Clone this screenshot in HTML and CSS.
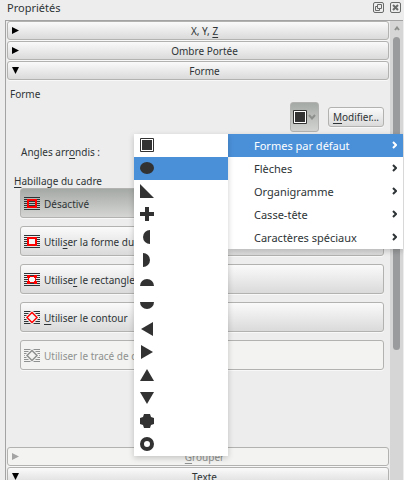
FILE: index.html
```
<!DOCTYPE html>
<html lang="fr">
<head>
<meta charset="utf-8">
<title>Propriétés</title>
<link rel="stylesheet" href="styles.css">
</head>
<body>
<svg class="defs" aria-hidden="true">
  <defs>
    <g id="lines">
      <path d="M0 .5H16M0 2.5H16M0 4.5H16M0 6.5H16M0 8.5H16M0 10.5H16M0 12.5H16" stroke="currentColor" fill="none"/>
    </g>
    <g id="frame-square">
      <path d="M.5 .5H13.5V13.5H.5Z" stroke="#323232" fill="#fff"/>
      <path d="M2 2H12V12H2Z" fill="#323232"/>
    </g>
  </defs>
</svg>
<main class="dock">
  <header class="titlebar">
    <h1>Propriétés</h1>
    <button class="tool" aria-label="Détacher"><svg width="11" height="11" viewBox="0 0 11 11"><rect x=".5" y=".5" width="10" height="10" rx="1.5"/><path d="M4.5 2.5H8.5V6.5H4.5ZM4.5 4.5H2.5V8.5H6.5V6.5"/></svg></button>
    <button class="tool" aria-label="Fermer"><svg width="11" height="11" viewBox="0 0 11 11"><rect x=".5" y=".5" width="10" height="10" rx="1.5"/><path class="thick" d="M3 3L8 8M8 3L3 8"/></svg></button>
  </header>
  <div class="body">
    <div class="content">
      <button class="section"><svg class="arrow" viewBox="0 0 7 7"><path d="M0 0L7 3.5L0 7Z"/></svg><span>X, Y, <u>Z</u></span></button>
      <button class="section"><svg class="arrow" viewBox="0 0 7 7"><path d="M0 0L7 3.5L0 7Z"/></svg><span>Ombre Portée</span></button>
      <button class="section"><svg class="arrow" viewBox="0 0 7 7"><path d="M0 0H7L3.5 7Z"/></svg><span>Forme</span></button>
      <section class="shape">
        <p class="caption">Forme</p>
        <div class="row">
          <button class="picker" aria-label="Choisir une forme"><svg width="14" height="14" viewBox="0 0 14 14"><use href="#frame-square"/></svg><svg width="8" height="6" viewBox="0 0 8 6"><path d="M1 1L4 4.5L7 1" fill="none" stroke="#8c8f8b" stroke-width="2"/></svg></button>
          <button class="edit"><u>M</u>odifier...</button>
          <div class="menus">
            <ul class="shapes" role="menu">
              <li><svg viewBox="0 0 14 14"><use href="#frame-square"/></svg></li>
              <li class="on"><svg viewBox="0 0 14 14"><ellipse cx="7" cy="7" rx="7" ry="6"/></svg></li>
              <li><svg viewBox="0 0 14 14"><path d="M0 0L14 14H0Z"/></svg></li>
              <li><svg viewBox="0 0 14 14"><path d="M5 0H9V5H14V9H9V14H5V9H0V5H5Z"/></svg></li>
              <li><svg viewBox="0 0 14 14"><path d="M10 0A7 7 0 0 0 10 14Z"/></svg></li>
              <li><svg viewBox="0 0 14 14"><path d="M3 0A7 7 0 0 1 3 14Z"/></svg></li>
              <li><svg viewBox="0 0 14 14"><path d="M0 10A7 7 0 0 1 14 10Z"/></svg></li>
              <li><svg viewBox="0 0 14 14"><path d="M0 3A7 7 0 0 0 14 3Z"/></svg></li>
              <li><svg viewBox="0 0 14 14"><path d="M13 0V14L1 7Z"/></svg></li>
              <li><svg viewBox="0 0 14 14"><path d="M1 0V14L13 7Z"/></svg></li>
              <li><svg viewBox="0 0 14 14"><path d="M7 1L14 13H0Z"/></svg></li>
              <li><svg viewBox="0 0 14 14"><path d="M0 1H14L7 13Z"/></svg></li>
              <li><svg viewBox="0 0 14 14"><path d="M4 0H10L11 3L14 4V10L11 11L10 14H4L3 11L0 10V4L3 3Z"/></svg></li>
              <li><svg viewBox="0 0 14 14"><circle cx="7" cy="7" r="5" fill="none" stroke="#323232" stroke-width="4"/></svg></li>
            </ul>
            <ul class="families" role="menu">
              <li class="on"><span>Formes par défaut</span><svg viewBox="0 0 5 8"><path d="M1 1L4 4L1 7"/></svg></li>
              <li><span>Flèches</span><svg viewBox="0 0 5 8"><path d="M1 1L4 4L1 7"/></svg></li>
              <li><span>Organigramme</span><svg viewBox="0 0 5 8"><path d="M1 1L4 4L1 7"/></svg></li>
              <li><span>Casse-tête</span><svg viewBox="0 0 5 8"><path d="M1 1L4 4L1 7"/></svg></li>
              <li><span>Caractères spéciaux</span><svg viewBox="0 0 5 8"><path d="M1 1L4 4L1 7"/></svg></li>
            </ul>
          </div>
        </div>
        <p class="corners">Angles arr<u>o</u>ndis :</p>
        <p class="wrap-title"><u>H</u>abillage du cadre</p>
        <div class="wraps">
          <button class="wrap pressed"><svg viewBox="0 0 16 13"><use href="#lines"/><path class="red" d="M4 3H12V10H4Z"/></svg><span>Désactivé</span></button>
          <button class="wrap"><svg viewBox="0 0 16 13"><use href="#lines"/><path class="red clear" d="M4 3H12V10H4Z"/></svg><span>Utili<u>s</u>er la forme du cadre</span></button>
          <button class="wrap"><svg viewBox="0 0 16 13"><use href="#lines"/><path class="red clear thin" d="M4.5 3.5H11.5V9.5H4.5Z"/><path d="M3 2H6V5H3ZM10 2H13V5H10ZM3 8H6V11H3ZM10 8H13V11H10Z" fill="#f00"/></svg><span>Utilise<u>r</u> le rectangle</span></button>
          <button class="wrap"><svg viewBox="0 0 16 13"><use href="#lines"/><path d="M8 -1L15.5 6.5L8 14L.5 6.5Z" fill="#efefef"/><path class="red clear medium" d="M8 1.5L13 6.5L8 11.5L3 6.5Z"/></svg><span><u>U</u>tiliser le contour</span></button>
          <button class="wrap" disabled><svg viewBox="0 0 16 13"><use href="#lines"/><path d="M8 -1L15.5 6.5L8 14L.5 6.5Z" fill="#f3f3f1"/><path d="M8 1.5L13 6.5L8 11.5L3 6.5Z" fill="#f3f3f1" stroke="currentColor" stroke-width="1.5"/></svg><span>Utiliser le tracé de découpe</span></button>
        </div>
      </section>
      <button class="section" disabled><svg class="arrow" viewBox="0 0 7 7"><path d="M0 0L7 3.5L0 7Z"/></svg><span><u>G</u>rouper</span></button>
      <button class="section"><svg class="arrow" viewBox="0 0 7 7"><path d="M0 0H7L3.5 7Z"/></svg><span>Texte</span></button>
    </div>
    <div class="scrollbar"><svg width="6" height="5" viewBox="0 0 6 5"><path d="M1 4L3 1.5L5 4" fill="none" stroke="#8c8f8b" stroke-width="2"/></svg><div class="thumb"></div></div>
  </div>
</main>
</body>
</html>
```
FILE: styles.css
```
* { box-sizing: border-box; }
body {
  margin: 0;
  height: 100vh;
  overflow: hidden;
  background: #ededed;
  color: #2e3436;
  font: 10px/14px "Noto Sans", "Open Sans", sans-serif;
}
h1, p, ul { margin: 0; padding: 0; font-weight: normal; }
ul { list-style: none; }
button { font: inherit; color: inherit; margin: 0; padding: 0; }
u { text-underline-offset: 2px; text-decoration-thickness: 1px; text-decoration-skip-ink: none; }
.defs { position: absolute; width: 0; height: 0; }
.dock { height: 100%; display: flex; flex-direction: column; }

.titlebar { flex: none; height: 20px; display: flex; align-items: center; gap: 6px; padding: 0 3px 5px 7px; }
.titlebar h1 { flex: 1; font-size: 11px; line-height: 16px; }
.tool { display: flex; border: 0; background: none; }
.tool svg { fill: none; stroke: #686b69; }
.tool .thick { stroke-width: 2; }

.body {
  flex: 1;
  min-height: 0;
  display: flex;
  margin: 0 1px 0 5px;
  border-top: 1px solid #a3a3a3;
  border-left: 1px solid #a3a3a3;
}
.content { flex: 1; min-width: 0; padding-left: 1px; }
.section, .edit, .wrap {
  border: 1px solid #b2b2b0;
  border-radius: 3px;
  background: linear-gradient(#fafafa, #dadada);
  box-shadow: 0 1px #f8f8f8;
}
.section {
  display: flex;
  align-items: center;
  width: calc(100% - 1px);
  height: 19px;
  margin-bottom: 1px;
  padding: 0 4px;
}
.section span { flex: 1; margin-left: 6px; text-align: center; }
.arrow { width: 7px; height: 7px; fill: #000; }
button:disabled { color: #8e918f; background: #f3f3f1; }
button:disabled .arrow { fill: #a4a4a4; }

.shape { height: 366px; padding: 6px 6px 0 3px; }
.row { position: relative; display: flex; justify-content: flex-end; align-items: flex-end; gap: 9px; height: 32px; }
.picker {
  display: flex;
  align-items: center;
  justify-content: center;
  gap: 1px;
  width: 29px;
  height: 30px;
  margin-bottom: 1px;
  border: 1px solid #b2b2b0;
  border-radius: 3px;
  background: linear-gradient(#a5a9a5, #d2d3d1);
}
.edit { width: 56px; height: 20px; margin-bottom: 6px; }
.corners { padding: 12px 0 0 11px; }
.wrap-title { padding: 15px 0 0 4px; }
.wraps { display: grid; gap: 8px; padding-left: 10px; }
.wrap { display: flex; align-items: center; gap: 4px; height: 30px; padding: 2px 3px 0; text-align: left; }
.wrap svg { flex: none; width: 16px; height: 13px; margin-bottom: 2px; }
.wrap .red { fill: none; stroke: #f00; stroke-width: 2; }
.wrap .clear { fill: #f4f4f4; }
.wrap .medium { stroke-width: 1.5; }
.wrap .thin { stroke-width: 1; }
.pressed { background: linear-gradient(#a5a9a5, #d5d6d4); }

.menus { position: absolute; z-index: 1; top: 33px; right: -19px; display: flex; align-items: flex-start; font-size: 11px; line-height: 16px; }
.menus ul { background: #fff; box-shadow: 0 2px 6px rgba(0, 0, 0, .2); }
.menus li { display: flex; align-items: center; height: 23px; padding-bottom: 1px; }
.shapes { position: relative; z-index: 1; width: 94px; }
.shapes li { padding-left: 6px; }
.shapes svg { width: 14px; height: 14px; fill: #323232; }
.families { width: 175px; }
.families li { justify-content: space-between; padding: 0 6px 0 26px; }
.families svg { width: 5px; height: 8px; margin-bottom: 1px; fill: none; stroke: currentColor; stroke-width: 2; }
.menus .on { background: #4a90d9; }
.families .on { color: #fff; }

.scrollbar { flex: none; width: 13px; padding: 5px 3px 0; background: #d6d6d6; display: flex; flex-direction: column; align-items: center; gap: 6px; }
.thumb { width: 7px; height: 69%; border-radius: 4px; background: #9a9b9c; }
```
